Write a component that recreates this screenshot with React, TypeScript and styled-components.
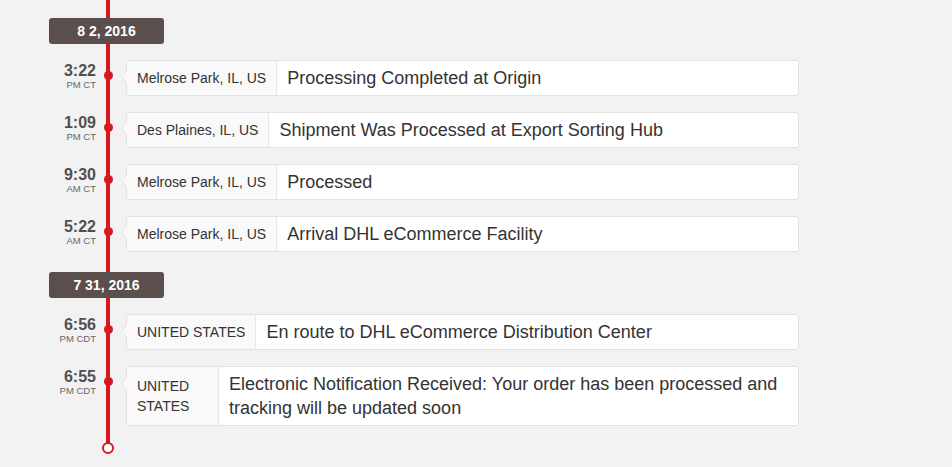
import React from "react";
import styled, { createGlobalStyle } from "styled-components";

const red = "#d8171f";

const GlobalStyle = createGlobalStyle`
  body {
    margin: 0;
    background: #f2f2f2;
    font-family: "Liberation Sans", Arial, sans-serif;
  }
`;

const Timeline = styled.div`
  position: relative;
  width: 800px;
  padding-top: 18px;

  &::before {
    content: "";
    position: absolute;
    left: 106px;
    top: 0;
    bottom: 6px;
    width: 4px;
    background: ${red};
  }
`;

const DateBadge = styled.div<{ $gap?: number }>`
  position: relative;
  margin: ${({ $gap }) => $gap ?? 0}px 0 0 49px;
  width: 115px;
  height: 26px;
  line-height: 26px;
  border-radius: 3px;
  background: #5a4f4c;
  color: #fff;
  font-weight: bold;
  font-size: 14px;
  text-align: center;
`;

const Row = styled.div`
  display: flex;
  align-items: flex-start;
  margin-top: 16px;
`;

const TimeCol = styled.div`
  width: 96px;
  padding-top: 2px;
  text-align: right;
  color: #505050;
`;

const Clock = styled.div`
  font-size: 16px;
  line-height: 17px;
  font-weight: bold;
`;

const Zone = styled.div`
  font-size: 9.5px;
  line-height: 11px;
  color: #666;
`;

const Rail = styled.div`
  position: relative;
  width: 30px;
  align-self: stretch;
`;

const Dot = styled.span`
  position: absolute;
  left: 7.5px;
  top: 10.5px;
  width: 9px;
  height: 9px;
  border-radius: 50%;
  background: ${red};
`;

const Card = styled.div`
  position: relative;
  display: flex;
  width: 671px;
  background: #fff;
  border: 1px solid #e2e2e2;
  border-radius: 3px;

  &::before,
  &::after {
    content: "";
    position: absolute;
    top: 9px;
    border-style: solid;
    border-color: transparent;
  }
  &::before {
    left: -6px;
    border-width: 7px 6px 7px 0;
    border-right-color: #e2e2e2;
  }
  &::after {
    left: -5px;
    border-width: 7px 6px 7px 0;
    border-right-color: #f9f9f9;
  }
`;

const Place = styled.div<{ $width?: number }>`
  display: flex;
  align-items: center;
  flex: 0 0 auto;
  box-sizing: border-box;
  width: ${({ $width }) => ($width ? `${$width}px` : "auto")};
  padding: 0 10px;
  background: #f9f9f9;
  border-right: 1px solid #e6e6e6;
  border-radius: 3px 0 0 3px;
  font-size: 14px;
  line-height: 20px;
  color: #333;
  white-space: ${({ $width }) => ($width ? "normal" : "nowrap")};
`;

const Text = styled.div`
  flex: 1;
  padding: 5px 10px;
  font-size: 18px;
  line-height: 24px;
  color: #333;
`;

const EndMarker = styled.div`
  position: relative;
  box-sizing: border-box;
  margin: 16px 0 0 102px;
  width: 12px;
  height: 12px;
  border: 2px solid ${red};
  border-radius: 50%;
  background: #fff;
`;

interface Event {
  time: string;
  zone: string;
  place: string;
  text: string;
  placeWidth?: number;
}

const groups: { date: string; events: Event[] }[] = [
  {
    date: "8 2, 2016",
    events: [
      { time: "3:22", zone: "PM CT", place: "Melrose Park, IL, US", text: "Processing Completed at Origin" },
      { time: "1:09", zone: "PM CT", place: "Des Plaines, IL, US", text: "Shipment Was Processed at Export Sorting Hub" },
      { time: "9:30", zone: "AM CT", place: "Melrose Park, IL, US", text: "Processed" },
      { time: "5:22", zone: "AM CT", place: "Melrose Park, IL, US", text: "Arrival DHL eCommerce Facility" },
    ],
  },
  {
    date: "7 31, 2016",
    events: [
      { time: "6:56", zone: "PM CDT", place: "UNITED STATES", text: "En route to DHL eCommerce Distribution Center" },
      {
        time: "6:55",
        zone: "PM CDT",
        place: "UNITED STATES",
        placeWidth: 92,
        text: "Electronic Notification Received: Your order has been processed and tracking will be updated soon",
      },
    ],
  },
];

export default function App() {
  return (
    <>
      <GlobalStyle />
      <Timeline>
        {groups.map((g, gi) => (
          <React.Fragment key={g.date}>
            <DateBadge $gap={gi > 0 ? 20 : 0}>{g.date}</DateBadge>
            {g.events.map((e, i) => (
              <Row key={i}>
                <TimeCol>
                  <Clock>{e.time}</Clock>
                  <Zone>{e.zone}</Zone>
                </TimeCol>
                <Rail>
                  <Dot />
                </Rail>
                <Card>
                  <Place $width={e.placeWidth}>{e.place}</Place>
                  <Text>{e.text}</Text>
                </Card>
              </Row>
            ))}
          </React.Fragment>
        ))}
        <EndMarker />
      </Timeline>
    </>
  );
}
